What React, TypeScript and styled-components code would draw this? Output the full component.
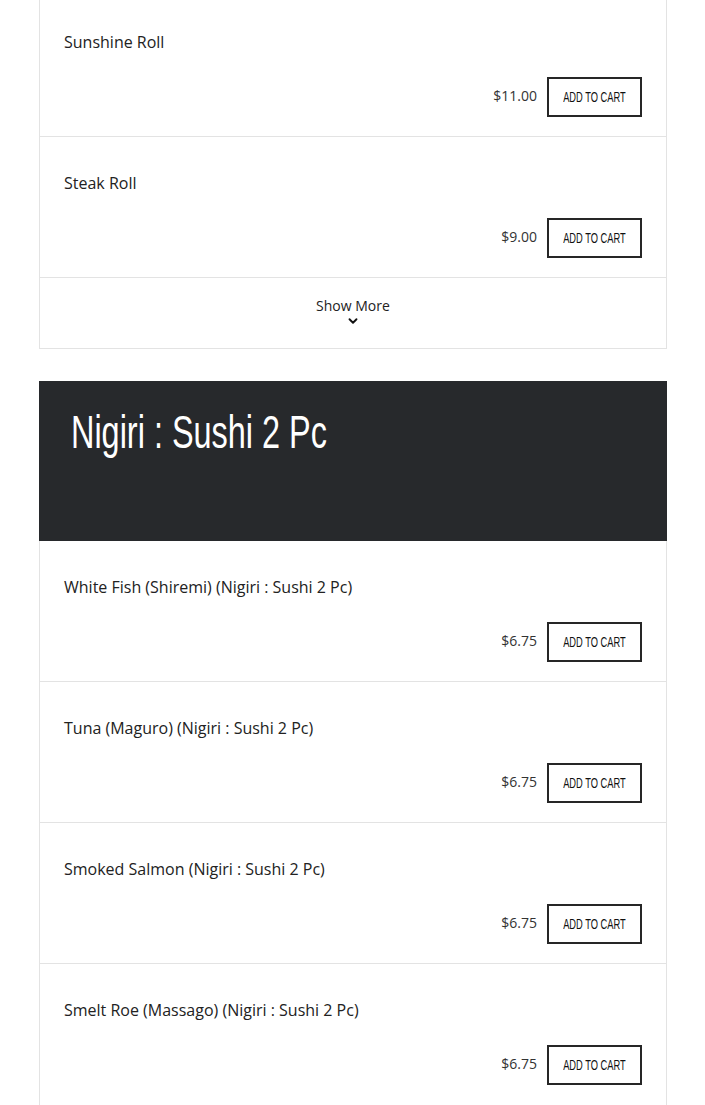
import styled, { createGlobalStyle } from 'styled-components';
import { ChevronDown } from 'lucide-react';

const rolls = [
  { name: 'Sunshine Roll', price: '$11.00' },
  { name: 'Steak Roll', price: '$9.00' },
];

const nigiri = [
  { name: 'White Fish (Shiremi) (Nigiri : Sushi 2 Pc)', price: '$6.75' },
  { name: 'Tuna (Maguro) (Nigiri : Sushi 2 Pc)', price: '$6.75' },
  { name: 'Smoked Salmon (Nigiri : Sushi 2 Pc)', price: '$6.75' },
  { name: 'Smelt Roe (Massago) (Nigiri : Sushi 2 Pc)', price: '$6.75' },
];

function Item({ name, price }: { name: string; price: string }) {
  return (
    <Row>
      <Name>{name}</Name>
      <Buy>
        <Price>{price}</Price>
        <CartButton>
          <Squeeze $scale={0.62}>ADD TO CART</Squeeze>
        </CartButton>
      </Buy>
    </Row>
  );
}

function App() {
  return (
    <>
      <GlobalStyle />
      <Page>
        <Card>
          {rolls.map((r) => (
            <Item key={r.name} {...r} />
          ))}
          <MoreRow>
            <span>Show More</span>
            <ChevronDown size={14} strokeWidth={3.2} />
          </MoreRow>
        </Card>

        <Section>
          <Header>
            <Title>
              <Squeeze $scale={0.69}>Nigiri : Sushi 2 Pc</Squeeze>
            </Title>
          </Header>
          <Card $noTop>
            {nigiri.map((r) => (
              <Item key={r.name} {...r} />
            ))}
          </Card>
        </Section>
      </Page>
    </>
  );
}

const GlobalStyle = createGlobalStyle`
  body {
    margin: 0;
    background: #fff;
    font-family: "Open Sans", "Noto Sans", sans-serif;
    color: #222;
  }
`;

const Page = styled.main`
  display: flex;
  flex-direction: column;
  gap: 32px;
  width: 628px;
  margin: -5px 0 0 39px;
`;

const Section = styled.section`
  display: flex;
  flex-direction: column;
`;

const Card = styled.div<{ $noTop?: boolean }>`
  border: 1px solid #e3e3e3;
  border-top: ${(p) => (p.$noTop ? 'none' : '1px solid #e3e3e3')};
  background: #fff;
`;

const Row = styled.div`
  display: flex;
  flex-direction: column;
  height: 141px;
  box-sizing: border-box;
  padding: 34px 24px 0 24px;
  border-bottom: 1px solid #e3e3e3;

  &:last-child {
    border-bottom: none;
  }
`;

const Name = styled.div`
  font-size: 16px;
  line-height: 24px;
  color: #222;
`;

const Buy = styled.div`
  display: flex;
  justify-content: flex-end;
  align-items: center;
  gap: 10px;
  margin-top: 23px;
`;

const Price = styled.span`
  font-size: 14px;
  line-height: 20px;
  color: #333;
  margin-top: -3px;
`;

const CartButton = styled.button`
  width: 95px;
  height: 40px;
  box-sizing: border-box;
  border: 2px solid #262626;
  background: #fff;
  color: #111;
  font-family: "Liberation Sans", Arial, sans-serif;
  font-size: 15px;
  padding: 0 0 1px;
  display: flex;
  align-items: center;
  justify-content: center;
  cursor: pointer;
`;

const Squeeze = styled.span<{ $scale?: number }>`
  display: inline-block;
  white-space: nowrap;
  transform: scaleX(${(p) => p.$scale ?? 1});
`;

const MoreRow = styled.div`
  height: 70px;
  display: flex;
  flex-direction: column;
  align-items: center;
  padding-top: 18px;
  box-sizing: border-box;
  font-size: 14px;
  line-height: 20px;
  color: #222;

  svg {
    margin-top: -2px;
    color: #111;
  }
`;

const Header = styled.div`
  height: 160px;
  box-sizing: border-box;
  background: #27292c;
  padding: 23px 32px 0;
`;

const Title = styled.h2`
  margin: 0;
  font-family: "Liberation Sans", Arial, sans-serif;
  font-weight: 400;
  font-size: 47px;
  line-height: 56px;
  color: #fff;

  span {
    transform-origin: left center;
  }
`;

export default App;
